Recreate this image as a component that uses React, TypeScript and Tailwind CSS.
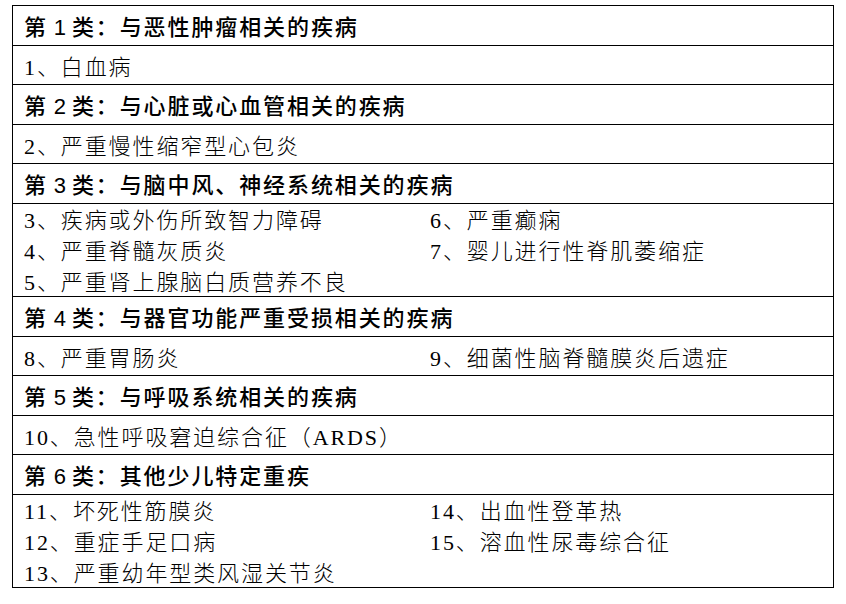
const sans = "font-['Liberation_Sans','Noto_Sans_CJK_SC',sans-serif]";
const serif = "font-['Liberation_Serif','Noto_Sans_CJK_SC',serif]";

type Section = {
  n: string;
  title: string;
  left: string[];
  right?: string[];
};

const sections: Section[] = [
  { n: "1", title: "与恶性肿瘤相关的疾病", left: ["1、白血病"] },
  { n: "2", title: "与心脏或心血管相关的疾病", left: ["2、严重慢性缩窄型心包炎"] },
  {
    n: "3",
    title: "与脑中风、神经系统相关的疾病",
    left: ["3、疾病或外伤所致智力障碍", "4、严重脊髓灰质炎", "5、严重肾上腺脑白质营养不良"],
    right: ["6、严重癫痫", "7、婴儿进行性脊肌萎缩症"],
  },
  {
    n: "4",
    title: "与器官功能严重受损相关的疾病",
    left: ["8、严重胃肠炎"],
    right: ["9、细菌性脑脊髓膜炎后遗症"],
  },
  { n: "5", title: "与呼吸系统相关的疾病", left: ["10、急性呼吸窘迫综合征（ARDS）"] },
  {
    n: "6",
    title: "其他少儿特定重疾",
    left: ["11、坏死性筋膜炎", "12、重症手足口病", "13、严重幼年型类风湿关节炎"],
    right: ["14、出血性登革热", "15、溶血性尿毒综合征"],
  },
];

function Header({ n, title }: { n: string; title: string }) {
  return (
    <div className={`h-[39px] px-[11px] pt-[5px] leading-[34px] text-[22px] tracking-[1.9px] font-medium text-black whitespace-nowrap ${sans}`}>
      第<span className="inline-block w-[24px] text-center tracking-normal">{n}</span>类：{title}
    </div>
  );
}

function Items({ left, right }: { left: string[]; right?: string[] }) {
  const multi = left.length > 1;
  const cls = multi
    ? "h-[93px] pt-[1px] leading-[31px]"
    : "h-[39px] pt-[4px] leading-[35px]";
  return (
    <div className={`grid grid-cols-[406px_1fr] border-t border-black ${cls} text-[22px] tracking-[1.9px] font-light text-black whitespace-nowrap ${serif}`}>
      <div className="pl-[11px]">
        {left.map((t) => (
          <div key={t}>{t}</div>
        ))}
      </div>
      <div className="pl-[11px]">
        {(right ?? []).map((t) => (
          <div key={t}>{t}</div>
        ))}
      </div>
    </div>
  );
}

export default function App() {
  return (
    <div className="w-[846px] h-[604px] bg-white pt-[5px] pl-[12px]">
      <div className="w-[822px] border border-black">
        {sections.map((s, i) => (
          <div key={s.n} className={i > 0 ? "border-t border-black" : ""}>
            <Header n={s.n} title={s.title} />
            <Items left={s.left} right={s.right} />
          </div>
        ))}
      </div>
    </div>
  );
}
